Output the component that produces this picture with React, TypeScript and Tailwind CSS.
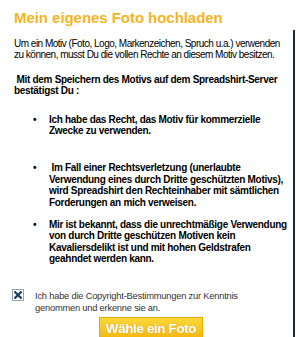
import React from "react";

export default function App() {
  return (
    <div className="w-[296px] h-[337px] overflow-hidden bg-white text-black" style={{ fontFamily: '"Liberation Sans", Arial, sans-serif' }}>
      <div className="h-[30px] pl-[14px] pt-[9px]">
        <h1 className="text-[15px] leading-[17px] font-bold tracking-[-0.05px] text-[#f5b51e]">Mein eigenes Foto hochladen</h1>
      </div>
      <div className="mr-[1px] border-r-2 border-[#1b2a38] h-[307px] pl-[14px] pr-[1px] text-[10px] leading-[11.4px] tracking-[-0.3px]">
        <p className="pt-[8px] tracking-[-0.5px] whitespace-nowrap">Um ein Motiv (Foto, Logo, Markenzeichen, Spruch u.a.) verwenden<br />zu können, musst Du die vollen Rechte an diesem Motiv besitzen.</p>
        <p className="mt-[13px] font-bold">&nbsp;Mit dem Speichern des Motivs auf dem Spreadshirt-Server bestätigst Du :</p>
        <ul className="mt-[17px] font-bold">
          <li className="flex">
            <span className="w-[35px] pl-[19px]">•</span>
            <span className="flex-1">Ich habe das Recht, das Motiv für kommerzielle Zwecke zu verwenden.</span>
          </li>
          <li className="flex mt-[26px]">
            <span className="w-[35px] pl-[19px]">•</span>
            <span className="flex-1">&nbsp;Im Fall einer Rechtsverletzung (unerlaubte Verwendung eines durch Dritte geschützten Motivs), wird Spreadshirt den Rechteinhaber mit sämtlichen Forderungen an mich verweisen.</span>
          </li>
          <li className="flex mt-[11px]">
            <span className="w-[35px] pl-[19px]">•</span>
            <span className="flex-1">Mir ist bekannt, dass die unrechtmäßige Verwendung von durch Dritte geschützen Motiven kein Kavaliersdelikt ist und mit hohen Geldstrafen geahndet werden kann.</span>
          </li>
        </ul>
        <div className="mt-[25px] flex items-start">
          <div className="ml-[-2px] mt-[-1px] w-[12px] h-[12px] border border-[#9aa3ad] bg-white flex items-center justify-center shrink-0">
            <svg width="8" height="8" viewBox="0 0 8 8">
              <path d="M1.2 1.2 L6.8 6.8 M6.8 1.2 L1.2 6.8" stroke="#1d3b5c" strokeWidth="2.2" strokeLinecap="square" />
            </svg>
          </div>
          <p className="ml-[11px] text-[9.3px] leading-[12px] tracking-[-0.2px] text-[#333]">Ich habe die Copyright-Bestimmungen zur Kenntnis<br />genommen und erkenne sie an.</p>
        </div>
        <div className="mt-[3px] flex justify-center pr-[4px]">
          <button className="w-[104px] h-[24px] border border-[#e7a800] bg-gradient-to-b from-[#fbd83a] to-[#f2b400] text-white font-bold text-[13.5px] leading-[20px] tracking-[-0.4px] [text-shadow:0_0_1px_rgba(160,100,0,0.6)]">Wähle ein Foto</button>
        </div>
      </div>
    </div>
  );
}
